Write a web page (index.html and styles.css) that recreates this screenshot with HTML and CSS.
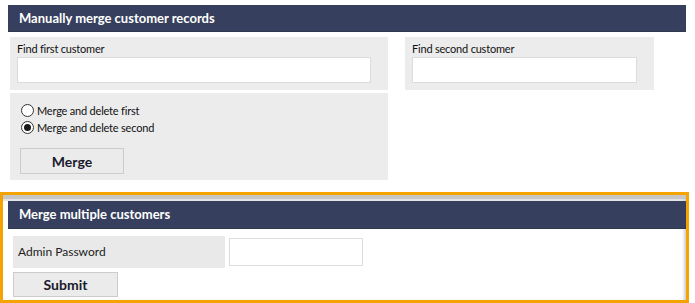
FILE: index.html
```html
<!DOCTYPE html>
<html>
<head>
<meta charset="utf-8">
<link rel="stylesheet" href="styles.css">
</head>
<body>
<div class="page">
  <div class="panel-head">Manually merge customer records</div>
  <div class="find-row">
    <div class="find-box first">
      <label class="find-label">Find first customer</label>
      <input class="find-input wide" type="text">
    </div>
    <div class="find-box second">
      <label class="find-label">Find second customer</label>
      <input class="find-input narrow" type="text">
    </div>
  </div>
  <div class="merge-box">
    <label class="radio-row"><input type="radio" name="m"> Merge and delete first</label>
    <label class="radio-row"><input type="radio" name="m" checked> Merge and delete second</label>
    <button class="btn merge-btn">Merge</button>
  </div>
</div>
<div class="highlight">
  <div class="inner">
    <div class="panel-head multi">Merge multiple customers</div>
    <div class="pw-row">
      <div class="pw-label">Admin Password</div>
      <input class="pw-input" type="password">
    </div>
    <button class="btn submit-btn">Submit</button>
  </div>
</div>
</body>
</html>
```
FILE: styles.css
```css
* { box-sizing: border-box; }
body {
  margin: 0;
  font-family: Lato, "Open Sans", sans-serif;
  color: #222;
  background: #fff;
  width: 695px;
  height: 303px;
  overflow: hidden;
}
.page {
  padding: 5px 9px 0 8px;
}
.panel-head {
  height: 27px;
  background: #363f5d;
  border-bottom: 1px solid #2d3a4c;
  color: #fff;
  font-weight: bold;
  font-size: 13px;
  line-height: 26px;
  padding-left: 11px;
}
.find-row {
  display: flex;
  margin-top: 5px;
  padding-left: 2px;
}
.find-box {
  background: #ececec;
  height: 53px;
  padding: 5px 0 0 7px;
}
.find-box.first { width: 378px; }
.find-box.second { width: 249px; margin-left: 17px; }
.find-label {
  display: block;
  font-size: 11px;
  line-height: 14px;
  letter-spacing: -0.2px;
  color: #111;
}
.find-input {
  display: block;
  margin-top: 1px;
  height: 26px;
  border: 1px solid #dcdcdc;
  background: #fff;
  padding: 0;
}
.find-input.wide { width: 354px; }
.find-input.narrow { width: 225px; }
.merge-box {
  margin: 3px 0 0 2px;
  width: 378px;
  height: 87px;
  background: #ececec;
  padding: 9px 0 0 11px;
}
.radio-row {
  display: flex;
  align-items: center;
  font-size: 11px;
  letter-spacing: -0.2px;
  height: 17px;
  color: #111;
}
.radio-row input {
  appearance: none;
  -webkit-appearance: none;
  margin: 0 3px 0 0;
  width: 13px;
  height: 13px;
  border: 1px solid #333;
  border-radius: 50%;
  background: #fff;
  display: flex;
  align-items: center;
  justify-content: center;
}
.radio-row input:checked::after {
  content: "";
  width: 7px;
  height: 7px;
  border-radius: 50%;
  background: #1a1a1a;
}
.btn {
  display: block;
  background: #ebebeb;
  border: 1px solid #cccccc;
  font-family: Lato, sans-serif;
  font-weight: bold;
  font-size: 14px;
  color: #1a1a2e;
  padding: 0;
}
.merge-btn {
  width: 104px;
  height: 26px;
  margin: 12px 0 0 -1px;
}
.highlight {
  margin-top: 12px;
  width: 689px;
  height: 111px;
  border: 3px solid #f5a300;
}
.inner {
  height: 100%;
  border-top: 4px solid #c6c6c6;
  padding: 2px 0 0 5px;
  box-shadow: inset -3px 0 3px -1px #cfcfcf, inset 0 2px 0 #e6e6e6;
}
.panel-head.multi {
  height: 28px;
  line-height: 27px;
}
.pw-row {
  display: flex;
  align-items: center;
  margin: 7px 0 0 5px;
}
.pw-label {
  width: 212px;
  height: 32px;
  background: #e9e9e9;
  font-size: 12px;
  line-height: 32px;
  padding-left: 5px;
  color: #222;
}
.pw-input {
  margin-left: 4px;
  width: 134px;
  height: 28px;
  border: 1px solid #dcdcdc;
  background: #fff;
  padding: 0;
}
.submit-btn {
  width: 105px;
  height: 25px;
  margin: 4px 0 0 5px;
}
```
